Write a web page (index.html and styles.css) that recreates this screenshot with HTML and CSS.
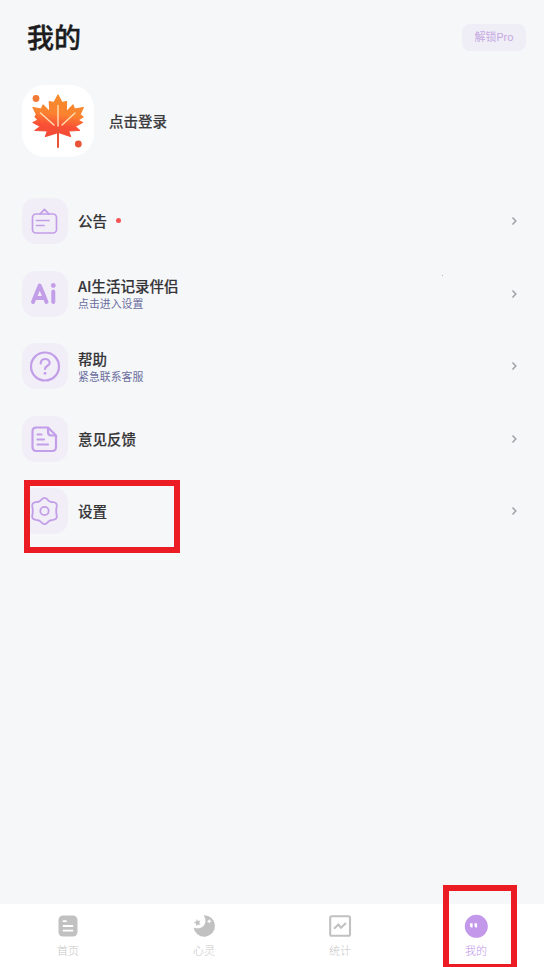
FILE: index.html
```html
<!DOCTYPE html>
<html lang="zh-CN">
<head>
<meta charset="utf-8">
<title>我的</title>
<link rel="stylesheet" href="styles.css">
</head>
<body>
<div class="app">
  <header class="header">
    <h1 class="title">我的</h1>
    <button class="pro">解锁Pro</button>
  </header>
  <section class="profile">
    <div class="avatar">
      <svg width="72" height="72" viewBox="0 0 72 72">
        <defs><linearGradient id="leaf" x1=".55" y1="0" x2=".4" y2="1"><stop offset="0" stop-color="#f58a2c"/><stop offset=".45" stop-color="#fb8330"/><stop offset=".75" stop-color="#fa4f36"/><stop offset="1" stop-color="#f04a35"/></linearGradient></defs>
        <path fill="url(#leaf)" stroke="url(#leaf)" stroke-width="1.2" stroke-linejoin="round" d="M36 10 L40 17.500 L44.500 16.500 L44.300 27 L51 20 L52.500 24 L61.300 22.500 L58 29.500 L61 32 L56 35 L60.500 37.500 L53 41.500 L57.500 45.500 L46.500 46 L48.500 51.500 L36.500 47.500 L23.500 51.500 L25.500 46 L13 45.500 L18.500 41.500 L11 37.500 L16 35 L13 31.500 L14.500 29.500 L11 22.500 L19.500 24 L21 20 L27.800 27 L27.300 16.500 L32 17.500 Z"/>
        <path d="M36 41V62" stroke="#e95439" stroke-width="2" stroke-linecap="round"/>
        <path d="M36 20.500V41M18.500 28L32 40M53 28L40 40" fill="none" stroke="#ffe0b4" stroke-width="1.400" stroke-linecap="round"/>
        <circle cx="14" cy="13.500" r="3.400" fill="#f07b38"/><circle cx="56.300" cy="59" r="3.400" fill="#e95439"/>
      </svg>
    </div>
    <span class="login">点击登录</span>
  </section>
  <main class="menu">
    <div class="row">
      <span class="tile"><svg class="icon" viewBox="0 0 46 46"><g stroke-width="1.700"><rect x="10.500" y="16" width="24" height="19" rx="3.500"/><path d="M18 16L22.500 11.300L27 16M14.500 22.500H27M14.500 27.500H22"/></g></svg></span>
      <div class="text"><span class="label">公告<i class="dot"></i></span></div>
      <svg class="chevron" viewBox="0 0 6 10"><path d="M1.500 1.500L4.800 5L1.500 8.500"/></svg>
    </div>
    <div class="row">
      <span class="tile"><svg class="icon" viewBox="0 0 46 46"><g stroke-width="4"><path d="M11 31L17.700 14.500L24.500 31M14 27H22M31.300 20.500V31"/></g><circle class="fill" cx="31.300" cy="14.500" r="2.400"/></svg></span>
      <div class="text"><span class="label">AI生活记录伴侣</span><span class="sub">点击进入设置</span></div>
      <svg class="chevron" viewBox="0 0 6 10"><path d="M1.500 1.500L4.800 5L1.500 8.500"/></svg>
    </div>
    <div class="row">
      <span class="tile"><svg class="icon" viewBox="0 0 46 46"><g stroke-width="2.200"><circle cx="23" cy="23.500" r="14"/><path d="M18.700 20.500C18.700 14.500 27.700 14.700 27.700 20C27.700 23 23 22.500 23 26"/></g><circle class="fill" cx="23" cy="30.300" r="1.400"/></svg></span>
      <div class="text"><span class="label">帮助</span><span class="sub">紧急联系客服</span></div>
      <svg class="chevron" viewBox="0 0 6 10"><path d="M1.500 1.500L4.800 5L1.500 8.500"/></svg>
    </div>
    <div class="row">
      <span class="tile"><svg class="icon" viewBox="0 0 46 46"><g stroke-width="2.200"><path d="M26 11.500H14.500Q10.500 11.500 10.500 15.500V31Q10.500 35 14.500 35H30Q34 35 34 31V19.500ZM26 11.500V16Q26 19.500 29.500 19.500H34M15.500 18.500H19.500M15.500 23.500H22M15.500 28.500H26"/></g></svg></span>
      <div class="text"><span class="label">意见反馈</span></div>
      <svg class="chevron" viewBox="0 0 6 10"><path d="M1.500 1.500L4.800 5L1.500 8.500"/></svg>
    </div>
    <div class="row">
      <span class="tile"><svg class="icon" viewBox="0 0 46 46"><g stroke-width="1.800"><path d="M19.900 11.200Q22.500 8.500 25.100 11.200Q27.500 14.200 31 14.200Q35.300 14.300 34.700 18.500Q33.700 23 34.700 27.500Q35.300 31.700 31 31.800Q27.500 31.800 25.100 34.800Q22.500 37.500 19.900 34.800Q17.500 31.800 14 31.800Q9.700 31.700 10.300 27.500Q11.300 23 10.300 18.500Q9.700 14.300 14 14.200Q17.500 14.200 19.900 11.200Z"/><circle cx="22.500" cy="23" r="4.200"/></g></svg></span>
      <div class="text"><span class="label">设置</span></div>
      <svg class="chevron" viewBox="0 0 6 10"><path d="M1.500 1.500L4.800 5L1.500 8.500"/></svg>
    </div>
  </main>
  <nav class="tabs">
    <div class="tab">
      <svg width="24" height="24" viewBox="0 0 24 24"><rect x="2.500" y="1.500" width="19" height="21" rx="4.500" fill="#c1c1c1"/><path d="M7.500 7.200H10M7.500 12H16.500M7.500 16.700H16.500" stroke="#fff" stroke-width="1.800" stroke-linecap="round"/></svg>
      <span>首页</span>
    </div>
    <div class="tab">
      <svg width="24" height="24" viewBox="0 0 24 24"><path fill="#c1c1c1" d="M11.500 1.200A10.800 10.800 0 1 1 1.500 13.500C5 15 9 14.600 11.500 12C14.300 9 14 4.500 11.500 1.200Z"/><path fill="#c1c1c1" d="M4.800 5L6 7L8.500 6.400L7.200 8.700L8.600 10.900L6 10.400L4.200 12L4 9.500L1.600 8.400L4.200 7.400Z"/><path d="M17.200 5L18 6.500L19.700 7.200L18 8L17.200 9.600L16.400 8L14.800 7.200L16.400 6.500Z" fill="#fff"/></svg>
      <span>心灵</span>
    </div>
    <div class="tab">
      <svg width="24" height="24" viewBox="0 0 24 24" fill="none" stroke="#c1c1c1" stroke-width="2.100"><rect x="2.200" y="2.200" width="19.800" height="19.600" rx="1.500"/><path d="M6 14.800L10.400 10.500L13 13.700L18 9"/></svg>
      <span>统计</span>
    </div>
    <div class="tab active">
      <svg width="24" height="24" viewBox="0 0 24 24"><circle cx="12.300" cy="12.300" r="11.500" fill="#c397ea"/><path d="M6 9.300H8.600V13.600H7L6 12ZM10.500 9.300H13.100V13.600H11.500L10.500 12Z" fill="#fff"/></svg>
      <span>我的</span>
    </div>
  </nav>
  <div class="mark mark-settings"></div>
  <div class="mark mark-mine"></div>
  <i class="speck"></i>
</div>
</body>
</html>
```
FILE: styles.css
```css
* { box-sizing: border-box; }
body { margin: 0; font-family: "Noto Sans CJK SC", sans-serif; background: #f5f7f9; }
.app { position: relative; display: flex; flex-direction: column; height: 967px; overflow: hidden; }
.header { display: flex; justify-content: space-between; align-items: center; height: 75px; padding: 0 18px 0 27px; }
.title { margin: 0; padding-bottom: 2px; font-size: 27px; line-height: 38px; font-weight: 500; color: #1c1c1e; -webkit-text-stroke: .4px #1c1c1e; }
.pro { width: 64px; height: 27px; padding: 0; border: 0; border-radius: 8px; background: #efedf6; color: #c6aae2; font: 11px/27px Roboto, "Noto Sans CJK SC", sans-serif; }
.profile { display: flex; align-items: center; height: 72px; margin: 10px 0 41px 22px; gap: 15px; }
.avatar { width: 72px; height: 72px; border-radius: 23px; background: #fff; }
.avatar svg { display: block; }
.login { padding-bottom: 1px; font-size: 14.500px; font-weight: 500; color: #3c3c3e; -webkit-text-stroke: .15px #3c3c3e; }
.menu { flex: 1; display: flex; flex-direction: column; gap: 26.500px; padding: 0 27px 0 22px; }
.row { display: flex; align-items: center; height: 46px; }
.tile { width: 46px; height: 46px; margin-right: 10px; border-radius: 14px; background: #f1eef8; }
.row:last-child .tile { clip-path: inset(0 0 0 2px); }
.icon { display: block; width: 46px; height: 46px; fill: none; stroke: #c39ee8; stroke-linecap: round; stroke-linejoin: round; }
.icon .fill { fill: #c39ee8; stroke: none; }
.text { flex: 1; display: flex; flex-direction: column; }
.label { display: flex; align-items: center; font-size: 14.500px; line-height: 20px; font-weight: 500; color: #353537; -webkit-text-stroke: .15px #353537; }
.sub { font-size: 10.900px; line-height: 15px; color: #6b6d9d; }
.dot { width: 5px; height: 5px; margin: -2px 0 0 9px; border-radius: 50%; background: #f45454; }
.chevron { width: 6px; height: 10px; fill: none; stroke: #a0a1a6; stroke-width: 1.500; }
.tabs { display: grid; grid-template-columns: repeat(4, 1fr); height: 63px; padding-top: 10px; background: #fff; }
.tab { display: flex; flex-direction: column; align-items: center; color: #c6c6c6; font-size: 11px; line-height: 16px; font-weight: 300; gap: 4px; }
.tab.active { color: #c397ea; }
.mark { position: absolute; border: 6px solid #ec1c24; }
.mark-settings { left: 23.500px; top: 479.500px; width: 156px; height: 73px; }
.mark-mine { left: 442.500px; top: 885px; width: 74px; height: 85px; }
.speck { position: absolute; left: 442px; top: 275px; width: 1px; height: 1px; background: #b5b5b8; }
```
